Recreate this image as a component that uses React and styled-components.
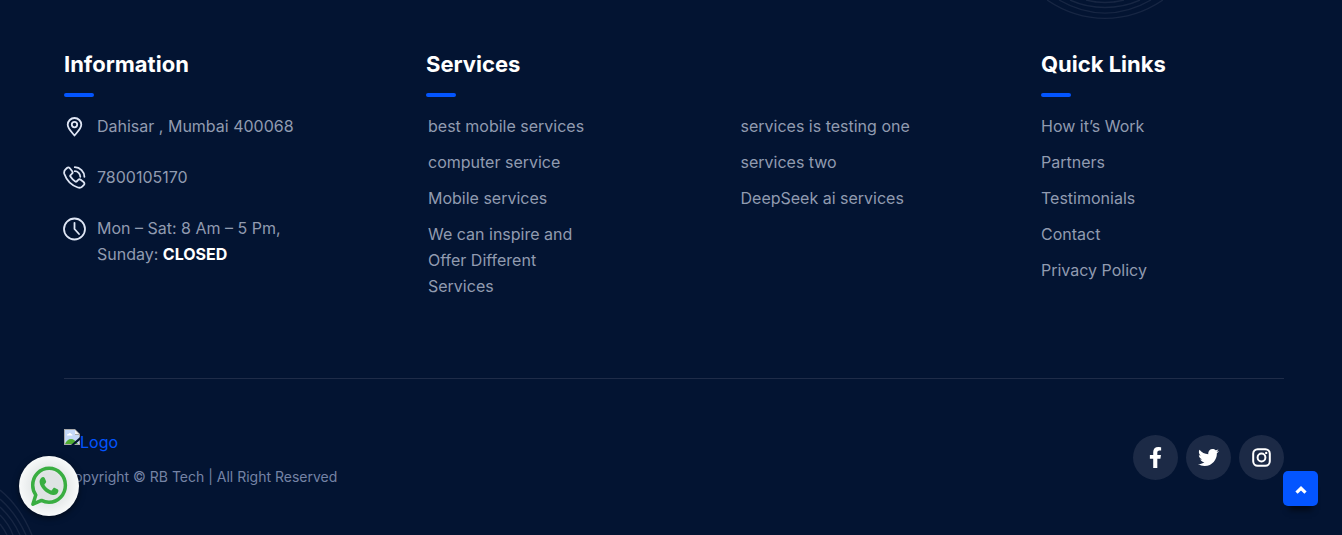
import React from "react";
import styled, { createGlobalStyle } from "styled-components";
import { FaFacebookF, FaTwitter } from "react-icons/fa";

const GlobalStyle = createGlobalStyle`
  *, *::before, *::after { box-sizing: border-box; }
  body {
    margin: 0;
    background: #031432;
    color: #919bb0;
    font: 16px/26px Inter, "Liberation Sans", sans-serif;
  }
  a { color: inherit; text-decoration: none; }
  ul { list-style: none; margin: 0; padding: 0; }
`;

const Footer = styled.footer`
  position: relative;
  overflow: hidden;
  min-height: 100vh;
  padding: 48px 58px 0 64px;
`;

const Rings = styled.svg`
  position: absolute;
  fill: none;
  stroke: #172643;
  stroke-width: 1.4;
  pointer-events: none;
`;

const TopRings = styled(Rings)`
  top: 0;
  right: 179px;
`;

const BottomRings = styled(Rings)`
  left: 0;
  bottom: 0;
`;

const Columns = styled.div`
  display: grid;
  grid-template-columns: 362fr 615fr 243fr;
  padding-bottom: 79px;
  border-bottom: 1px solid #1f2c48;
`;

const Heading = styled.h2`
  margin: 0 0 16px;
  color: #fff;
  font: 700 22px/32px Inter, "Liberation Sans", sans-serif;

  &::after {
    content: "";
    display: block;
    width: 30px;
    height: 4px;
    margin-top: 13px;
    border-radius: 2px;
    background: #0355ff;
  }
`;

const InfoList = styled.ul`
  display: grid;
  gap: 25px;
`;

const InfoItem = styled.li`
  display: flex;
  gap: 11px;

  svg {
    flex: none;
    width: 24px;
    height: 24px;
    margin: 2px 0 0 -2px;
    fill: none;
    stroke: #dfe6f5;
    stroke-width: 1.8;
    stroke-linecap: round;
    stroke-linejoin: round;
  }

  strong { color: #fff; font-weight: 700; }
`;

const ServiceColumns = styled.div`
  display: grid;
  grid-template-columns: 1fr 1fr;
  column-gap: 12px;
  padding-left: 2px;
`;

const LinkList = styled.ul`
  display: grid;
  align-content: start;
  gap: 10px;

  li { max-width: 174px; }
  a:hover { color: #fff; }
`;

const BottomBar = styled.div`
  display: flex;
  justify-content: space-between;
  align-items: flex-start;
  padding-top: 50px;
`;

const LogoLink = styled.a`
  display: flex;
  color: #0355ff;
`;

const Copyright = styled.p`
  margin: 10px 0 0;
  color: #7583a5;
  font-size: 14px;
  line-height: 24px;
`;

const SocialLinks = styled.nav`
  display: flex;
  gap: 8px;
  padding-top: 6px;
`;

const SocialLink = styled.a`
  display: grid;
  place-items: center;
  width: 45px;
  height: 45px;
  border-radius: 50%;
  background: #1c2a46;
  color: #fff;
  font-size: 21px;
`;

const ChatLink = styled.a`
  position: fixed;
  left: 19px;
  bottom: 19px;
  width: 60px;
  height: 60px;
  border-radius: 50%;
  background: radial-gradient(circle, #dfe3e4 0 30%, #f7f9f9 70%);
  box-shadow: 0 2px 6px rgba(0, 0, 0, 0.5);
`;

const TopButton = styled.button`
  position: fixed;
  right: 24px;
  bottom: 29px;
  display: grid;
  place-items: center;
  width: 35px;
  height: 35px;
  padding: 2px 0 0;
  border: 0;
  border-radius: 5px;
  background: #0355ff;
  box-shadow: 0 10px 6px -6px rgba(0, 0, 0, 0.6);
  cursor: pointer;
`;

const PinIcon = () => (
  <svg viewBox="0 0 24 24" aria-hidden="true">
    <path d="M12.500 20.500C10 17.500 5.700 13.500 5.700 9.800a6.800 6.800 0 0 1 13.600 0c0 3.700-4.300 7.700-6.800 10.700Z" />
    <circle cx="12.500" cy="9.600" r="2.700" />
  </svg>
);

const PhoneIcon = () => (
  <svg viewBox="0 0 24 24" aria-hidden="true">
    <path d="M3.300 3.700 5 2c.9-.8 2.100-.6 2.900.3l2.300 2.900c.6.8.5 1.800-.2 2.500L8.400 9.300c-.3.400-.3.800 0 1.300 1.300 2 2.900 3.600 4.900 4.900.5.300.9.300 1.300 0l1.600-1.600c.7-.7 1.700-.8 2.500-.2l2.900 2.300c.9.800 1.100 2 .3 2.900l-1.700 1.700c-1.100 1.100-2.700 1.400-4.300.9C9.700 19.400 4.600 14.300 2.400 8c-.5-1.600-.2-3.200.9-4.300Z" />
    <path d="M12.800 1.200c5.200 0 9.600 4.400 9.600 9.600M12.800 5.200c3 0 5.500 2.500 5.500 5.600" />
  </svg>
);

const ClockIcon = () => (
  <svg viewBox="0 0 24 24" aria-hidden="true">
    <circle cx="12.500" cy="12" r="10.500" />
    <path d="M12.500 5.800V12l4.500 5" />
  </svg>
);

const InstagramIcon = () => (
  <svg width="19" height="19" viewBox="0 0 19 19" fill="none" stroke="#fff" strokeWidth="2" aria-hidden="true">
    <rect x="1.200" y="1.200" width="16.600" height="16.600" rx="4.500" />
    <circle cx="9.500" cy="9.500" r="3.900" />
    <circle cx="14.200" cy="4.900" r="1.200" fill="#fff" stroke="none" />
  </svg>
);

const MissingImageIcon = () => (
  <svg width="16" height="16" viewBox="0 0 16 16" aria-hidden="true">
    <path d="M0 0h11l5 5v11H0Z" fill="#a9a9a9" />
    <path d="M1 1h10v5h4v9H1Z" fill="#c5d8f8" />
    <path d="M11 1v4h4Z" fill="#f4f4f4" />
    <path d="M3 6.500c0-1.400 1-1.700 1.500-1.500.4-1.400 2.300-1.300 2.500 0 1.200-.1 1.500.8 1.500 1.500Z" fill="#fff" />
    <path d="M1 15c1-3 3.500-5 6-5s5 2 7 5Z" fill="#51ad32" />
    <path d="M7 16 16 8v3l-6 5Z" fill="#031432" />
  </svg>
);

const ChatIcon = () => (
  <svg width="60" height="60" viewBox="0 0 60 60" aria-hidden="true">
    <path
      d="m13.900 48.200 2.900-9.300c-2-2.800-3.100-6-3.100-9.700 0-9.400 7.300-17 16.400-17s16.300 7.600 16.300 17-7.300 17.100-16.400 17.100c-2.800 0-5.300-.7-7.500-1.900Z"
      fill="none"
      stroke="#39ae41"
      strokeWidth="3.500"
      strokeLinejoin="round"
    />
    <path
      d="M22.300 21.800c.9-1.100 2.700-1.200 3.400.1l1.400 3.300c.3.800-.2 1.500-1.400 2.900-.4.500-.3.900.1 1.500 1.400 2.200 3.300 3.700 5.600 4.700.7.300 1.100.2 1.600-.4l1.300-1.600c.5-.6 1.100-.6 1.700-.3l2.500 1.200c1 .5 1 1.200.8 2.200-.5 2.600-3 3.800-5.300 3.500-6.600-1-13-7.300-13.400-13-.1-1.500.6-3 1.700-4.100Z"
      fill="#39ae41"
    />
  </svg>
);

const services = [
  ["best mobile services", "computer service", "Mobile services", "We can inspire and Offer Different Services"],
  ["services is testing one", "services two", "DeepSeek ai services"],
];

const quickLinks = ["How it’s Work", "Partners", "Testimonials", "Contact", "Privacy Policy"];

const Links = ({ items }) => (
  <LinkList>
    {items.map((item) => (
      <li key={item}><a href="#">{item}</a></li>
    ))}
  </LinkList>
);

export default function App() {
  return (
    <>
      <GlobalStyle />
      <Footer>
        <TopRings width="116" height="20" viewBox="0 0 116 20" aria-hidden="true">
          <path d="M0 0C36 24.500 80 24.500 116 0M12 0C42 17.500 74 17.500 104 0M23 0C45 10 71 10 93 0M39 0Q58 5 77 0" />
        </TopRings>
        <BottomRings width="34" height="46" viewBox="0 0 34 46" aria-hidden="true">
          <path d="M0 1Q20 17 32 46M0 10Q16 24 26 46M0 18Q13 30 20 46M0 26Q9 35 13 46M0 35Q4 40 7 46" />
        </BottomRings>

        <Columns>
          <section>
            <Heading>Information</Heading>
            <InfoList>
              <InfoItem><PinIcon /><span>Dahisar , Mumbai 400068</span></InfoItem>
              <InfoItem><PhoneIcon /><a href="tel:7800105170">7800105170</a></InfoItem>
              <InfoItem>
                <ClockIcon />
                <span>Mon – Sat: 8 Am – 5 Pm,<br />Sunday: <strong>CLOSED</strong></span>
              </InfoItem>
            </InfoList>
          </section>
          <section>
            <Heading>Services</Heading>
            <ServiceColumns>
              {services.map((items) => <Links key={items[0]} items={items} />)}
            </ServiceColumns>
          </section>
          <section>
            <Heading>Quick Links</Heading>
            <Links items={quickLinks} />
          </section>
        </Columns>

        <BottomBar>
          <div>
            <LogoLink href="#"><MissingImageIcon />Logo</LogoLink>
            <Copyright>Copyright © RB Tech | All Right Reserved</Copyright>
          </div>
          <SocialLinks aria-label="Social media">
            <SocialLink href="#" aria-label="Facebook"><FaFacebookF /></SocialLink>
            <SocialLink href="#" aria-label="Twitter"><FaTwitter /></SocialLink>
            <SocialLink href="#" aria-label="Instagram"><InstagramIcon /></SocialLink>
          </SocialLinks>
        </BottomBar>
      </Footer>

      <ChatLink href="#" aria-label="Chat on WhatsApp"><ChatIcon /></ChatLink>
      <TopButton type="button" aria-label="Back to top">
        <svg width="12" height="8" viewBox="0 0 12 8" fill="none" stroke="#fff" strokeWidth="3.200" aria-hidden="true">
          <path d="M1.500 6.700 6 2.300l4.500 4.400" />
        </svg>
      </TopButton>
    </>
  );
}
